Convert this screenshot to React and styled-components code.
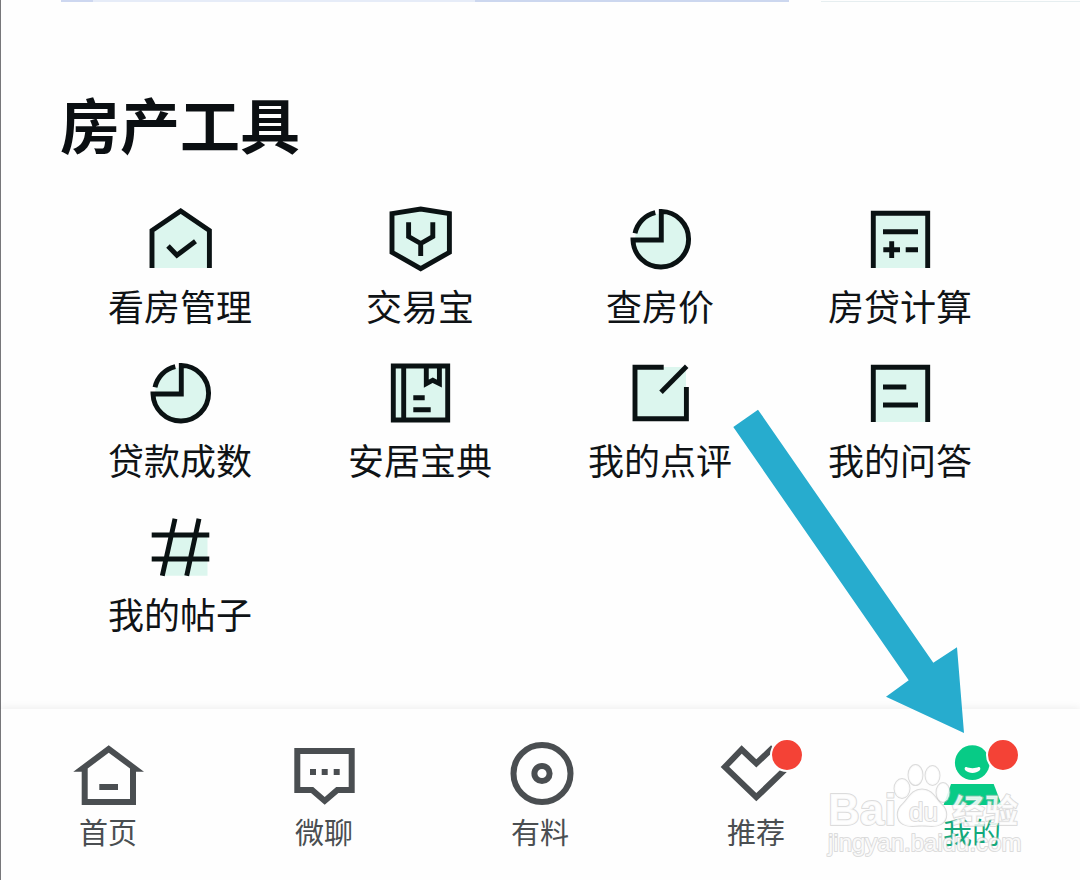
import React from "react";
import styled, { createGlobalStyle } from "styled-components";

const GlobalStyle = createGlobalStyle`
  *, *::before, *::after { box-sizing: border-box; }
  body {
    margin: 0;
    background: #fefefe;
    font-family: "Noto Sans CJK SC", "Noto Sans", sans-serif;
  }
`;

const Page = styled.div`
  position: relative;
  display: flex;
  flex-direction: column;
  min-height: 100vh;
  overflow: hidden;
  box-shadow: inset 1px 0 #77777a;
`;

const CardEdges = styled.div`
  display: flex;
  gap: 32px;
  height: 2px;
  padding-left: 61px;
`;

const BannerEdge = styled.div`
  flex: 0 0 728px;
  background: linear-gradient(
    90deg,
    #cdd7f0 32px,
    #e6ecf8 32px,
    #e6ecf8 414px,
    #ccd7ef 414px
  );
`;

const NextCardEdge = styled.div`
  flex: 1;
  border-bottom: 1px solid #e6eef0;
`;

const Main = styled.main`
  flex: 1;
  padding: 85px 60px 72px;
`;

const Title = styled.h1`
  margin: 0 0 45px;
  font-size: 60px;
  line-height: 72px;
  font-weight: 700;
  color: #0b0f12;
`;

const ToolGrid = styled.div`
  display: grid;
  grid-template-columns: repeat(4, 1fr);
  row-gap: 29px;
`;

const ToolButton = styled.button`
  display: flex;
  flex-direction: column;
  align-items: center;
  gap: 5px;
  padding: 0;
  border: 0;
  background: none;
  font-family: inherit;
  font-size: 36px;
  line-height: 48px;
  color: #0f1316;
  white-space: nowrap;
  cursor: pointer;
`;

const ToolIcon = styled.svg`
  width: 72px;
  height: 72px;
  fill: none;
  stroke: #0a1213;
  stroke-width: 4.9;

  .tint {
    fill: #dcf6ee;
    stroke: none;
  }
`;

const TabBar = styled.nav`
  position: relative;
  display: grid;
  grid-template-columns: repeat(5, 1fr);
  padding: 29px 0;
  box-shadow: 0 -1px 8px rgba(0, 0, 0, 0.07);
`;

const Tab = styled.a`
  display: flex;
  flex-direction: column;
  align-items: center;
  gap: 1px;
  font-size: 29px;
  line-height: 40px;
  text-decoration: none;
  color: ${({ $active }) => ($active ? "#12a97b" : "#4a4e51")};
`;

const TabIconBox = styled.span`
  position: relative;
  width: 72px;
  height: 72px;
`;

const TabIcon = styled.svg`
  display: block;
  width: 72px;
  height: 72px;
  fill: ${({ $active }) => ($active ? "#07cb86" : "#4a4e51")};
`;

const Badge = styled.span`
  position: absolute;
  top: 0;
  right: -12px;
  width: 34px;
  height: 34px;
  border: 2px solid #fefefe;
  border-radius: 50%;
  background: #f44236;
`;

const Pointer = styled.svg`
  position: absolute;
  top: 409px;
  right: 115px;
  width: 232px;
  height: 325px;
  pointer-events: none;
`;

const Watermark = styled.svg`
  position: absolute;
  top: 51px;
  right: 50px;
  width: 210px;
  height: 100px;
  pointer-events: none;
  fill: rgba(255, 255, 255, 0.85);
  stroke: rgba(190, 190, 190, 0.55);
  stroke-width: 2;
  stroke-linejoin: round;
  paint-order: stroke;
  font-family: "Liberation Sans", "Noto Sans CJK SC", sans-serif;
`;

const pie = (
  <>
    <circle className="tint" cx="37" cy="35.5" r="26" />
    <path d="M37.3 7.4A27.8 27.8 0 1 1 9 36H37.3Z" />
    <path d="M31.3 8.7A27 27 0 0 0 11 29.3" />
  </>
);

const tools = [
  {
    label: "看房管理",
    icon: (
      <>
        <path className="tint" d="M8 64V26.5L36.7 7L65.4 26.5V64Z" />
        <path d="M8 64V26.5L36.7 7L65.4 26.5V64" />
        <path d="M24 42L32.9 51.3L51.5 37.3" />
      </>
    ),
  },
  {
    label: "交易宝",
    icon: (
      <>
        <path className="tint" d="M8 9.7L36.7 5L65.4 9.7V48.3L36.7 64.6L8 48.3Z" />
        <path d="M8 9.7L36.7 5L65.4 9.7V48.3L36.7 64.6L8 48.3Z" />
        <path d="M24.6 18.3V32.5L36.7 39.5L48.8 32.5V18.3M36.7 39V52" />
      </>
    ),
  },
  { label: "查房价", icon: pie },
  {
    label: "房贷计算",
    icon: (
      <>
        <path className="tint" d="M9 9H64V64H9Z" />
        <path d="M9.3 64V9.3H63.7V64" />
        <path d="M19 27.7H54M19.3 45.7H36M27.7 37.3V54M41.7 45.7H54" />
      </>
    ),
  },
  { label: "贷款成数", icon: pie },
  {
    label: "安居宝典",
    icon: (
      <>
        <path className="tint" d="M9 8H64V62H9Z" />
        <path d="M9.3 8H63.7V62H9.3ZM19.7 8V62" />
        <path d="M42.3 8V25.6L48.8 22.2L55.4 25.6V8" />
        <path d="M29.3 39.7H40.7M29.3 51.7H46.7" />
      </>
    ),
  },
  {
    label: "我的点评",
    icon: (
      <>
        <path className="tint" d="M11 9H62V61H11Z" />
        <path d="M39.7 9.3H11V60.7H62.4V29" />
        <path d="M37 34.3L62.7 8.3" />
      </>
    ),
  },
  {
    label: "我的问答",
    icon: (
      <>
        <path className="tint" d="M9 9H64V64H9Z" />
        <path d="M9.3 64V9.3H63.7V64M19 29H42.3M19 47H54" />
      </>
    ),
  },
  {
    label: "我的帖子",
    icon: (
      <>
        <path className="tint" d="M28 22H63.5V63.7H19Z" />
        <path d="M7.7 23H65.3M7.7 47H65.3M31 6.7L18.3 63.7M55 6.7L42.7 63.7" />
      </>
    ),
  },
];

const tabs = [
  {
    label: "首页",
    icon: (
      <>
        <path
          fillRule="evenodd"
          d="M36.7 7.3L72 33.7H64V67H9.7V33.7H1.3ZM36.7 14.7L15.7 30.5V61H58V30.5Z"
        />
        <path d="M27.3 46H46V52H27.3Z" />
      </>
    ),
  },
  {
    label: "微聊",
    icon: (
      <>
        <path
          fillRule="evenodd"
          d="M6.3 10H66.7V55H50.4L36.7 66.7L23 55H6.3ZM12.3 16V49H25.2L36.7 59L48.2 49H60.7V16Z"
        />
        <path d="M22 31H28V37H22ZM33.7 31H39.7V37H33.7ZM45.7 31H51.7V37H45.7Z" />
      </>
    ),
  },
  {
    label: "有料",
    icon: (
      <g fill="none" stroke="#4a4e51" strokeWidth="6">
        <circle cx="38" cy="35.5" r="28.5" />
        <circle cx="38" cy="35.5" r="7.6" />
      </g>
    ),
  },
  {
    label: "推荐",
    badge: true,
    icon: (
      <path
        fill="none"
        stroke="#4a4e51"
        strokeWidth="6"
        d="M36.3 25.4L21.7 11.5L4.9 29L36.3 59.2L67.7 29L51 11.5Z"
      />
    ),
  },
  {
    label: "我的",
    badge: true,
    active: true,
    icon: (
      <>
        <circle cx="36.3" cy="24.7" r="17.4" />
        <path d="M15 46H57.7L65.7 67H7.5Z" />
        <path
          d="M30.500 29C33 30.500 40 30.500 42.500 29C44.500 28.500 45 31 43.500 32.500C40 35.800 33 35.800 29.500 32.500C28 31 28.500 28.500 30.500 29Z"
          fill="#fefefe"
        />
      </>
    ),
  },
];

export default function App() {
  return (
    <Page>
      <GlobalStyle />
      <CardEdges>
        <BannerEdge />
        <NextCardEdge />
      </CardEdges>
      <Main>
        <Title>房产工具</Title>
        <ToolGrid>
          {tools.map(({ label, icon }) => (
            <ToolButton key={label} type="button">
              <ToolIcon viewBox="0 0 72 72" aria-hidden="true">
                {icon}
              </ToolIcon>
              {label}
            </ToolButton>
          ))}
        </ToolGrid>
      </Main>
      <TabBar>
        {tabs.map(({ label, icon, badge, active }) => (
          <Tab key={label} href="#" $active={active}>
            <TabIconBox>
              <TabIcon viewBox="0 0 72 72" $active={active} aria-hidden="true">
                {icon}
              </TabIcon>
              {badge && <Badge />}
            </TabIconBox>
            {label}
          </Tab>
        ))}
        <Watermark viewBox="0 0 210 100">
          <text x="8" y="65" fontSize="44" fontWeight="700">
            Bai
          </text>
          <ellipse cx="82" cy="28.5" rx="7.5" ry="9.5" />
          <ellipse cx="95.5" cy="15" rx="7" ry="10" />
          <ellipse cx="112.5" cy="15.5" rx="7" ry="9.5" />
          <ellipse cx="123" cy="32.5" rx="6.5" ry="9.5" />
          <path d="M102 29.5C112 29.5 115 38 121 44C128 50 128 60 121 64C115 67.500 110 65.500 102 65.500C94 65.500 89 67.500 83 64C76 60 76 50 83 44C89 38 92 29.500 102 29.500Z" />
          <text x="89" y="61" fontSize="26">
            du
          </text>
          <text x="132" y="63" fontSize="33" fontWeight="700">
            经验
          </text>
          <text x="8" y="91" fontSize="24">
            jingyan.baidu.com
          </text>
        </Watermark>
      </TabBar>
      <Pointer viewBox="0 0 232 325" aria-hidden="true">
        <path
          d="M0.300 18L25 0.700L200.300 253.700L224 238.300L231 324L153 287.700L175.700 271.300Z"
          fill="#27acce"
        />
      </Pointer>
    </Page>
  );
}
